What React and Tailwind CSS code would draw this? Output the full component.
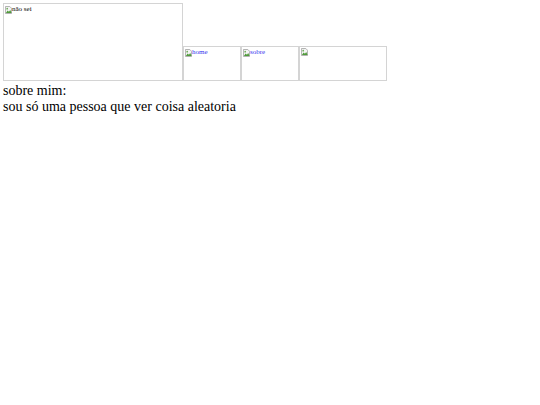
const BrokenIcon = () => (
  <svg width="7" height="8" viewBox="0 0 8 9" className="shrink-0">
    <path d="M0.5 0.5h5l2 2v6h-7z" fill="#f4f4f4" stroke="#a8a8a8" strokeWidth="1" />
    <path d="M1 8l2-3 1.5 1.5L6 4.5 7.5 8z" fill="#4f9a3a" />
    <circle cx="2.5" cy="3" r="1" fill="#6fae5a" />
  </svg>
)

function Pic({ alt, className, link }) {
  return (
    <div className={`border border-[#d4d4d4] flex items-start ${className}`}>
      <div className="flex items-center pt-[1px] pl-[1px]">
        <BrokenIcon />
        {alt && (
          <span className={`text-[7px] leading-[9px] ${link ? 'text-[#3333ee]' : 'text-black'}`}>{alt}</span>
        )}
      </div>
    </div>
  )
}

export default function App() {
  return (
    <div className="pl-[3px] pt-[3px] bg-white min-h-[405px] font-['Liberation_Serif',serif] text-black">
      <div className="flex items-end">
        <Pic alt="não sei" className="w-[180px] h-[78px]" />
        <Pic alt="home" link className="w-[58px] h-[35px]" />
        <Pic alt="sobre" link className="w-[58px] h-[35px]" />
        <Pic className="w-[88px] h-[35px]" />
      </div>
      <div className="text-[14px] leading-[16px] pt-[2px]">
        <p>sobre mim:</p>
        <p>sou só uma pessoa que ver coisa aleatoria</p>
      </div>
    </div>
  )
}
